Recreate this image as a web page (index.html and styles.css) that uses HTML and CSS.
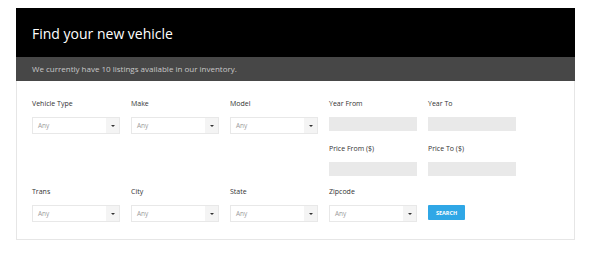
FILE: index.html
```html
<!DOCTYPE html>
<html lang="en">
<head>
    <meta charset="UTF-8">
    <title>Find your new vehicle</title>
    <link rel="stylesheet" href="styles.css">
</head>
<body>
    <div class="finder">
        <div class="finder-head">
            <h1>Find your new vehicle</h1>
        </div>
        <div class="finder-sub">We currently have 10 listings available in our inventory.</div>

        <form class="finder-body">
            <div class="field">
                <label>Vehicle Type</label>
                <div class="select"><span>Any</span><i class="caret"></i></div>
            </div>
            <div class="field">
                <label>Make</label>
                <div class="select"><span>Any</span><i class="caret"></i></div>
            </div>
            <div class="field">
                <label>Model</label>
                <div class="select"><span>Any</span><i class="caret"></i></div>
            </div>
            <div class="field">
                <label>Year From</label>
                <input type="text" class="text-input">
            </div>
            <div class="field">
                <label>Year To</label>
                <input type="text" class="text-input">
            </div>

            <div class="field skip">
                <label>Price From ($)</label>
                <input type="text" class="text-input">
            </div>
            <div class="field">
                <label>Price To ($)</label>
                <input type="text" class="text-input">
            </div>

            <div class="field last-row">
                <label>Trans</label>
                <div class="select"><span>Any</span><i class="caret"></i></div>
            </div>
            <div class="field last-row">
                <label>City</label>
                <div class="select"><span>Any</span><i class="caret"></i></div>
            </div>
            <div class="field last-row">
                <label>State</label>
                <div class="select"><span>Any</span><i class="caret"></i></div>
            </div>
            <div class="field last-row">
                <label>Zipcode</label>
                <div class="select"><span>Any</span><i class="caret"></i></div>
            </div>
            <div class="field last-row">
                <label>&nbsp;</label>
                <button type="button" class="search-btn">SEARCH</button>
            </div>
        </form>
    </div>
</body>
</html>
```

FILE: styles.css
```css
* {
    margin: 0;
    padding: 0;
    box-sizing: border-box;
}

body {
    font-family: 'Open Sans', 'Liberation Sans', sans-serif;
    background: white;
    padding: 8px 15px 0 16px;
}

.finder {
    width: 559px;
}

.finder-head {
    background: #000;
    height: 49px;
    padding: 0 16px;
    display: flex;
    align-items: center;
}

.finder-head h1 {
    color: white;
    font-size: 14px;
    font-weight: 400;
    margin-top: 1px;
}

.finder-sub {
    background: #474747;
    height: 24px;
    padding: 0 16px;
    line-height: 24px;
    color: #c8c8c8;
    font-size: 8px;
}

.finder-body {
    border: 1px solid #e6e6e6;
    border-top: none;
    padding: 18px 15px 17px;
    display: grid;
    grid-template-columns: repeat(5, 88px);
    column-gap: 11px;
    row-gap: 10px;
}

.field label {
    display: block;
    height: 10px;
    line-height: 10px;
    font-size: 7px;
    color: #333;
    margin-bottom: 8px;
}

.field.skip {
    grid-column: 4;
}

.field.last-row {
    margin-top: 1px;
}

.select {
    height: 17px;
    border: 1px solid #e8e8e8;
    background: white;
    display: flex;
    align-items: center;
    justify-content: space-between;
}

.select span {
    font-size: 6.5px;
    color: #9a9a9a;
    padding-left: 5px;
}

.caret {
    width: 13px;
    height: 100%;
    background: #f4f4f4;
    display: flex;
    align-items: center;
    justify-content: center;
}

.caret::after {
    content: '';
    border-left: 2px solid transparent;
    border-right: 2px solid transparent;
    border-top: 2px solid #333;
}

.text-input {
    display: block;
    width: 100%;
    height: 14px;
    border: none;
    background: #e9e9e9;
}

.search-btn {
    display: block;
    width: 37px;
    height: 15px;
    background: #2fa7e6;
    border: none;
    border-radius: 1px;
    color: white;
    font-family: 'Open Sans', 'Liberation Sans', sans-serif;
    font-size: 5.5px;
    font-weight: 700;
}
```
